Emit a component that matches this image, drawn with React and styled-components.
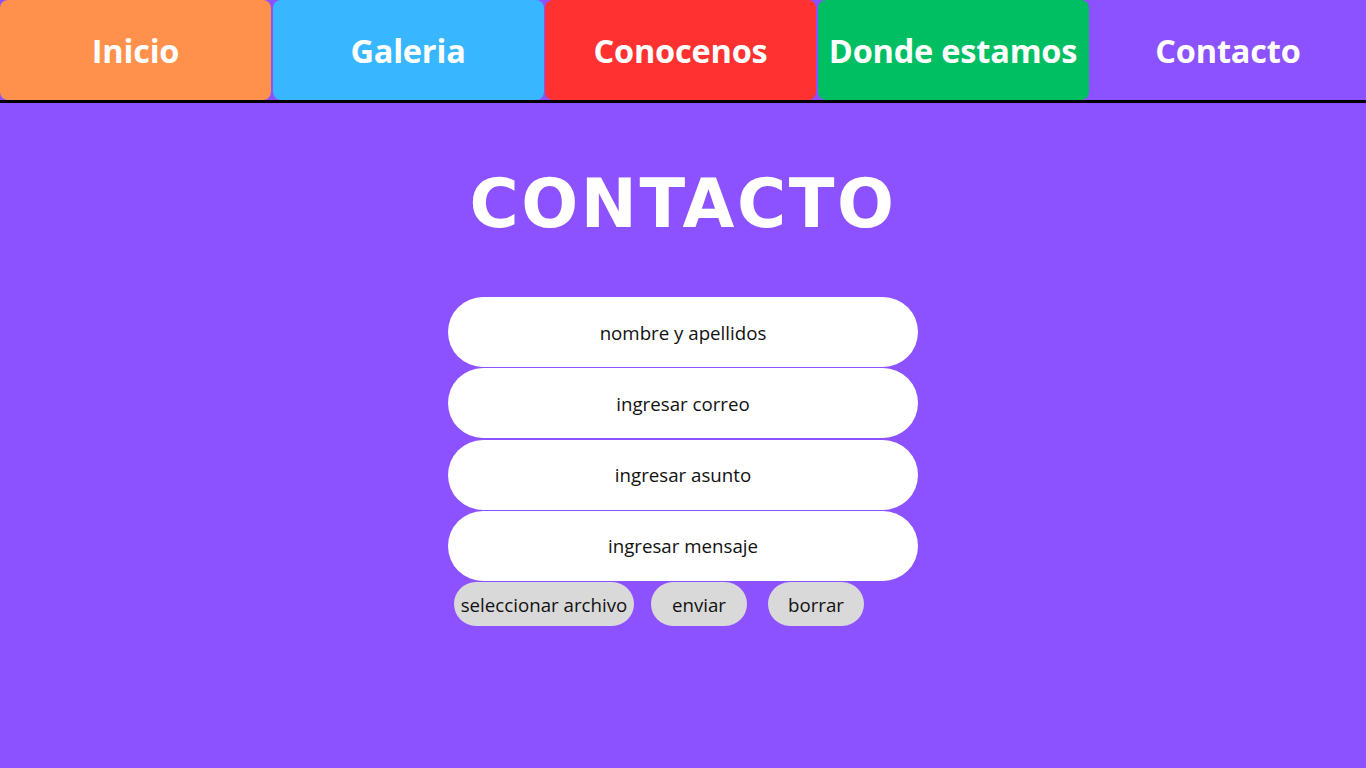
import React from 'react';
import styled, { createGlobalStyle } from 'styled-components';

const GlobalStyle = createGlobalStyle`
  html, body {
    margin: 0;
    padding: 0;
    background: #8c52ff;
    font-family: "Open Sans", "Liberation Sans", sans-serif;
  }
  * { box-sizing: border-box; }
`;

const Page = styled.div`
  min-height: 768px;
  background: #8c52ff;
`;

const Nav = styled.nav`
  display: grid;
  grid-template-columns: repeat(4, 271px) 1fr;
  gap: 1.5px;
  height: 103px;
  border-bottom: 3px solid #000;
`;

const Tab = styled.a`
  display: flex;
  align-items: center;
  justify-content: center;
  background: ${p => p.$color || 'transparent'};
  border-radius: 8px;
  color: #fff;
  font-size: 32.5px;
  font-weight: 700;
  text-decoration: none;
  letter-spacing: -0.2px;
`;

const Main = styled.main`
  display: flex;
  flex-direction: column;
  align-items: center;
`;

const Title = styled.h1`
  margin: 61px 0 0;
  font-family: "DejaVu Sans", "Liberation Sans", sans-serif;
  font-weight: 700;
  font-size: 67px;
  line-height: 80px;
  letter-spacing: 2.6px;
  color: #fff;
`;

const Form = styled.form`
  margin-top: 53px;
  width: 470px;
  display: flex;
  flex-direction: column;
  gap: 1.25px;
`;

const Field = styled.input`
  height: 70px;
  border: none;
  border-radius: 35px;
  background: #fff;
  text-align: center;
  font-family: "Open Sans", sans-serif;
  font-size: 18.7px;
  color: #111;
  outline: none;

  &::placeholder {
    color: #111;
    opacity: 1;
  }
`;

const Actions = styled.div`
  display: flex;
  padding-left: 6px;
`;

const Pill = styled.button`
  height: 44px;
  width: ${p => p.$w}px;
  margin-left: ${p => p.$ml || 0}px;
  border: none;
  border-radius: 22px;
  background: #d9d9d9;
  font-family: "Open Sans", sans-serif;
  font-size: 18.7px;
  color: #111;
  padding: 0;
  white-space: nowrap;
`;

const tabs = [
  { label: 'Inicio', color: '#ff914d' },
  { label: 'Galeria', color: '#38b6ff' },
  { label: 'Conocenos', color: '#ff3131' },
  { label: 'Donde estamos', color: '#00bf63' },
  { label: 'Contacto' },
];

const App = () => {
  return (
    <Page>
      <GlobalStyle />
      <Nav>
        {tabs.map(t => (
          <Tab key={t.label} $color={t.color} href="#">{t.label}</Tab>
        ))}
      </Nav>
      <Main>
        <Title>CONTACTO</Title>
        <Form onSubmit={e => e.preventDefault()}>
          <Field placeholder="nombre y apellidos" />
          <Field placeholder="ingresar correo" />
          <Field placeholder="ingresar asunto" />
          <Field placeholder="ingresar mensaje" />
          <Actions>
            <Pill type="button" $w={180}>seleccionar archivo</Pill>
            <Pill type="submit" $w={96} $ml={17}>enviar</Pill>
            <Pill type="reset" $w={96} $ml={21}>borrar</Pill>
          </Actions>
        </Form>
      </Main>
    </Page>
  );
};

export default App;
